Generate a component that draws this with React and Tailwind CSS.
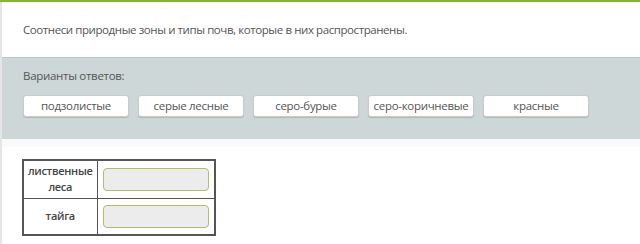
export default function App() {
  const options = ["подзолистые", "серые лесные", "серо-бурые", "серо-коричневые", "красные"];
  const rows = [["лиственные", "леса"], ["тайга"]];
  return (
    <div className="w-[640px] h-[244px] bg-white overflow-hidden" style={{ fontFamily: '"Open Sans", "Noto Sans", sans-serif' }}>
      <div className="h-[2px] bg-[#86b23a]" />
      <div className="border-l-2 border-[#e4e6e6] h-[242px] flex flex-col">
        <div className="h-[56px] flex items-center pl-[21px] pt-[1px] text-[11.5px] tracking-[-0.42px] text-[#555] border-b border-[#bcc6c6]">
          Соотнеси природные зоны и типы почв, которые в них распространены.
        </div>
        <div className="h-[81px] bg-[#cdd7d7] pl-[21px] pt-[10px]">
          <div className="text-[11.5px] tracking-[-0.3px] text-[#555] leading-[16px]">Варианты ответов:</div>
          <div className="flex gap-[9px] mt-[11px]">
            {options.map((o) => (
              <div key={o} className="w-[106px] h-[22px] bg-white rounded-[3px] border border-[#c4cccc] shadow-[0_1px_1px_rgba(0,0,0,0.15)] flex items-center justify-center text-[11.5px] tracking-[-0.3px] text-[#555]">
                {o}
              </div>
            ))}
          </div>
        </div>
        <div className="h-[8px] bg-[#f9fafa]" />
        <div className="pl-[20px] pt-[12px]">
          <table className="border-collapse border-2 border-[#555]">
            <tbody>
              {rows.map((r, i) => (
                <tr key={i} className={i === 0 ? "h-[38px] border-b border-[#555]" : "h-[37px]"}>
                  <td className="w-[74px] border-r border-[#555] text-center text-[11px] tracking-[-0.3px] font-semibold text-[#444] leading-[16px] p-0">
                    {r.map((t) => (
                      <div key={t}>{t}</div>
                    ))}
                  </td>
                  <td className="w-[118px] p-0">
                    <div className="mx-[5px] h-[23px] bg-[#ececec] border-[1.5px] border-[#a9c262] rounded-[4px]" />
                  </td>
                </tr>
              ))}
            </tbody>
          </table>
        </div>
      </div>
    </div>
  );
}
